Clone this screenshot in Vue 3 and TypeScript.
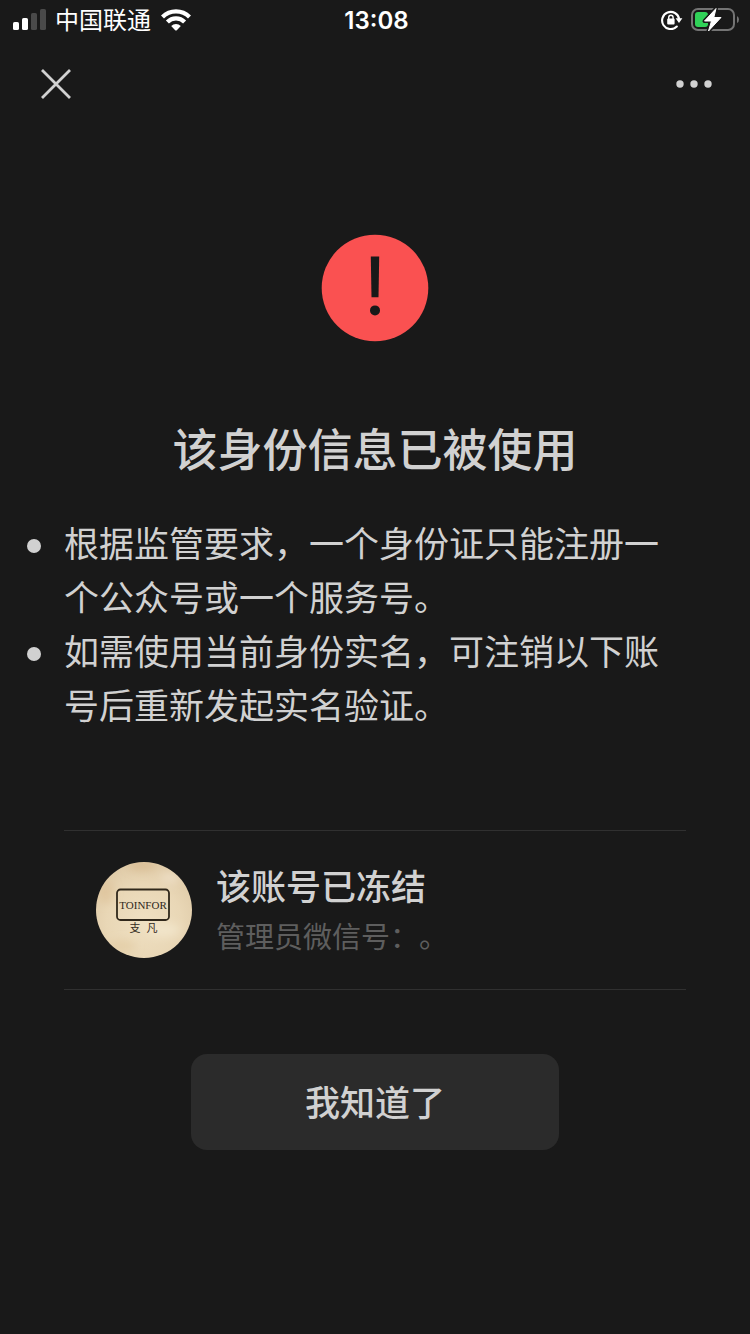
<script setup lang="ts">
const carrier = '中国联通'
const time = '13:08'
const reasons: string[] = [
  '根据监管要求，一个身份证只能注册一个公众号或一个服务号。',
  '如需使用当前身份实名，可注销以下账号后重新发起实名验证。',
]
const account = { name: '该账号已冻结', admin: '管理员微信号：。' }
</script>

<template>
  <div class="page">
    <header class="status">
      <div class="side">
        <svg class="signal" width="34" height="22" viewBox="0 0 34 22" aria-hidden="true">
          <rect x="0" y="13" width="6" height="8" rx="1.6" fill="#fff" />
          <rect x="9" y="9" width="6" height="12" rx="1.6" fill="#fff" />
          <rect x="18" y="4" width="6" height="17" rx="1.6" fill="#4a4a4a" />
          <rect x="27" y="0" width="6" height="21" rx="1.6" fill="#4a4a4a" />
        </svg>
        <span class="carrier">{{ carrier }}</span>
        <svg class="wifi" width="30" height="22" viewBox="0 0 30 22" aria-hidden="true">
          <g fill="none" stroke="#fff" stroke-width="4.2">
            <path d="M1.5 8 A19 19 0 0 1 28.5 8" />
            <path d="M6.4 13 A12 12 0 0 1 23.6 13" />
          </g>
          <path d="M10.2 17 A6.8 6.8 0 0 1 19.8 17 L15.8 21.2 Q15 22 14.2 21.2 Z" fill="#fff" />
        </svg>
      </div>
      <span class="time">{{ time }}</span>
      <div class="side end">
        <svg width="22" height="20" viewBox="0 0 22 20" aria-hidden="true">
          <path d="M15.8 16.6 A8.6 8.6 0 1 1 18.2 9" fill="none" stroke="#fff" stroke-width="2.1" stroke-linecap="round" />
          <path d="M14.6 8.3 H21.4 L18 13 Z" fill="#fff" />
          <rect x="6.2" y="8.6" width="7.4" height="5.8" rx="1" fill="#fff" />
          <path d="M7.7 9 V7.4 A2.2 2.2 0 0 1 12.1 7.4 V9" fill="none" stroke="#fff" stroke-width="1.4" />
        </svg>
        <svg width="49" height="28" viewBox="0 0 49 28" aria-hidden="true">
          <rect x="1" y="3" width="42" height="21" rx="6" fill="none" stroke="#747474" stroke-width="2" />
          <path d="M46 10 Q48 11 48 13.5 Q48 16 46 17 Z" fill="#747474" />
          <rect x="4" y="6" width="13" height="15" rx="3" fill="#30d158" />
          <path d="M25 2.5 L13.5 15 H20.5 L17.5 25 L30 11.5 H22.8 Z" fill="#191919" stroke="#191919" stroke-width="4" stroke-linejoin="round" />
          <path d="M25 2.5 L13.5 15 H20.5 L17.5 25 L30 11.5 H22.8 Z" fill="#fff" stroke="#fff" stroke-width="1" stroke-linejoin="round" />
        </svg>
      </div>
    </header>

    <nav class="nav">
      <button type="button" class="icon-button" aria-label="关闭">
        <svg width="32" height="32" viewBox="0 0 32 32">
          <path d="M2 2 L30 30 M30 2 L2 30" stroke="#d1d1d1" stroke-width="2.8" />
        </svg>
      </button>
      <button type="button" class="icon-button" aria-label="更多">
        <svg width="36" height="8" viewBox="0 0 36 8" fill="#d1d1d1">
          <circle cx="4" cy="4" r="3.7" />
          <circle cx="18" cy="4" r="3.7" />
          <circle cx="32" cy="4" r="3.7" />
        </svg>
      </button>
    </nav>

    <main class="content">
      <svg class="warn" width="108" height="108" viewBox="0 0 108 108" aria-hidden="true">
        <circle cx="54" cy="54" r="53.3" fill="#fa5151" />
        <path d="M49.8 22.5 H58.2 L57.5 63.2 H50.5 Z" fill="#191919" />
        <circle cx="54" cy="76.4" r="5" fill="#191919" />
      </svg>

      <h1 class="title">该身份信息已被使用</h1>

      <ul class="reasons">
        <li v-for="reason in reasons" :key="reason">{{ reason }}</li>
      </ul>

      <section class="account">
        <svg class="avatar" width="96" height="96" viewBox="0 0 96 96" role="img" aria-label="TOINFOR 支凡">
          <defs>
            <radialGradient id="paper" cx="50%" cy="62%" r="65%">
              <stop offset="0" stop-color="#efe0c2" />
              <stop offset="0.6" stop-color="#e9d7b6" />
              <stop offset="1" stop-color="#dec9a6" />
            </radialGradient>
            <filter id="soft" x="-50%" y="-50%" width="200%" height="200%">
              <feGaussianBlur stdDeviation="4" />
            </filter>
            <clipPath id="round"><circle cx="48" cy="48" r="48" /></clipPath>
          </defs>
          <g clip-path="url(#round)">
            <rect width="96" height="96" fill="url(#paper)" />
            <g filter="url(#soft)">
              <ellipse cx="46" cy="4" rx="14" ry="5" fill="#d2ad80" opacity="0.5" />
              <ellipse cx="10" cy="30" rx="8" ry="12" fill="#dbbd92" opacity="0.5" />
              <ellipse cx="74" cy="16" rx="10" ry="6" fill="#efe0c8" opacity="0.8" />
              <ellipse cx="68" cy="68" rx="16" ry="7" fill="#f3e7cd" opacity="0.8" />
              <ellipse cx="26" cy="84" rx="14" ry="6" fill="#e0c79c" opacity="0.5" />
            </g>
          </g>
          <rect x="21" y="27.5" width="52" height="30.5" rx="3.5" fill="none" stroke="#30281b" stroke-width="1.8" />
          <text x="47" y="47" class="brand">TOINFOR</text>
          <text x="39" y="70" class="seal">支</text>
          <text x="56" y="70" class="seal">凡</text>
        </svg>
        <div class="details">
          <h2 class="name">{{ account.name }}</h2>
          <p class="admin">{{ account.admin }}</p>
        </div>
      </section>

      <button type="button" class="confirm">我知道了</button>
    </main>
  </div>
</template>

<style>
body {
  margin: 0;
  background: #191919;
}
</style>

<style scoped>
.page {
  min-height: 100vh;
  background: #191919;
  color: #d1d1d1;
  font-family: "Noto Sans CJK SC", "Noto Sans", sans-serif;
  text-spacing-trim: space-all;
}

.status {
  display: grid;
  grid-template-columns: 1fr auto 1fr;
  align-items: center;
  height: 40px;
  padding: 0 10px 0 13px;
  color: #fff;
}

.side {
  display: flex;
  align-items: center;
  gap: 8px;
}

.side.end {
  justify-content: flex-end;
}

.carrier {
  margin-right: 2px;
  font-size: 24px;
  line-height: 36px;
  padding-bottom: 2px;
}

.time {
  padding-top: 2px;
  font-family: Inter, "Liberation Sans", sans-serif;
  font-size: 24px;
  font-weight: 600;
  line-height: 36px;
}

.nav {
  display: flex;
  align-items: center;
  justify-content: space-between;
  height: 88px;
  padding: 0 34px;
}

.icon-button {
  display: flex;
  align-items: center;
  justify-content: center;
  width: 44px;
  height: 44px;
  padding: 0;
  border: 0;
  background: none;
}

.content {
  display: flex;
  flex-direction: column;
  align-items: center;
  padding: 106px 64px 64px;
}

.title {
  margin: 74px 0 0;
  font-size: 45px;
  font-weight: 500;
  line-height: 64px;
}

.reasons {
  align-self: stretch;
  margin: 35px 0 0;
  padding: 0;
  list-style: none;
  font-size: 35px;
  line-height: 54px;
}

.reasons li {
  position: relative;
}

.reasons li::before {
  content: "";
  position: absolute;
  top: 24px;
  left: -37px;
  width: 14px;
  height: 14px;
  border-radius: 50%;
  background: #d1d1d1;
}

.account {
  align-self: stretch;
  display: flex;
  align-items: center;
  gap: 24px;
  margin-top: 99px;
  padding: 29px 32px;
  border-top: 1px solid #303030;
  border-bottom: 1px solid #303030;
}

.avatar {
  flex: none;
}

.brand {
  font-family: "Liberation Serif", serif;
  font-size: 11px;
  text-anchor: middle;
  fill: #30281b;
}

.seal {
  font-family: "Noto Sans CJK SC", sans-serif;
  font-size: 11px;
  text-anchor: middle;
  fill: #30281b;
}

.name {
  margin: 0;
  font-size: 35px;
  font-weight: 500;
  line-height: 50px;
}

.admin {
  margin: 0;
  color: #5e5e5e;
  font-size: 29px;
  line-height: 50px;
}

.confirm {
  width: 368px;
  max-width: 100%;
  height: 96px;
  margin-top: 64px;
  padding: 0 0 4px;
  border: 0;
  border-radius: 16px;
  background: #2b2b2b;
  color: #d1d1d1;
  font-family: inherit;
  font-size: 35px;
  font-weight: 500;
}
</style>
